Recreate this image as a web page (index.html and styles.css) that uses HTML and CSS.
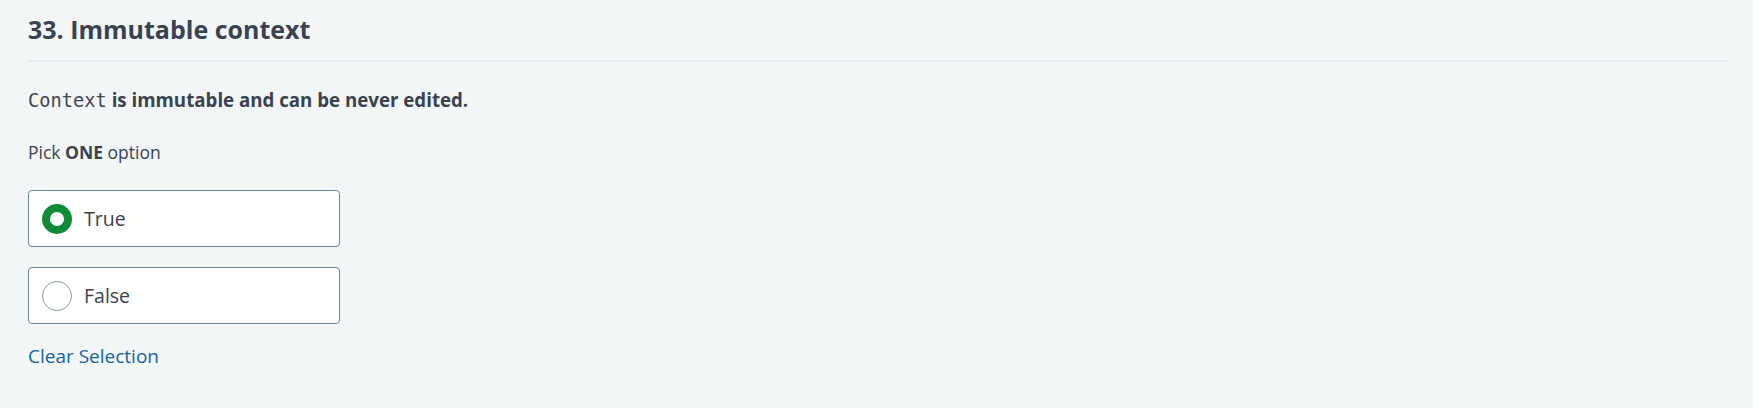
FILE: index.html
```html
<!DOCTYPE html>
<html lang="en">
<head>
<meta charset="utf-8">
<title>33. Immutable context</title>
<link rel="stylesheet" href="styles.css">
</head>
<body>
<main class="question">
  <h2 class="question-title">33. Immutable context</h2>
  <p class="statement"><code class="mono">Context</code> <strong>is immutable and can be never edited.</strong></p>
  <p class="instruction">Pick <strong>ONE</strong> option</p>
  <div class="options">
    <label class="option">
      <span class="radio radio-checked"></span>
      <span class="option-text">True</span>
    </label>
    <label class="option">
      <span class="radio"></span>
      <span class="option-text">False</span>
    </label>
  </div>
  <a class="clear" href="#">Clear Selection</a>
</main>
</body>
</html>
```
FILE: styles.css
```css
html, body {
  margin: 0;
  padding: 0;
  background: #f3f6f7;
}
body {
  font-family: "Open Sans", "Noto Sans", sans-serif;
  color: #39424e;
}
.question {
  padding: 0 26px 0 28px;
  display: flex;
  flex-direction: column;
  align-items: flex-start;
}
.question-title {
  align-self: stretch;
  margin: 0;
  padding: 12px 0 14px;
  font-size: 25px;
  font-weight: 700;
  line-height: 34px;
  border-bottom: 2px solid #e5ebec;
}
.statement {
  margin: 25px 0 0;
  font-size: 18.7px;
  line-height: 26px;
}
.mono {
  font-family: "DejaVu Sans Mono", "Liberation Mono", monospace;
  font-size: 18.7px;
  line-height: 1;
  color: #3d4652;
}
.statement strong { font-weight: 700; }
.instruction {
  margin: 27px 0 0;
  font-size: 17.5px;
  line-height: 24px;
}
.instruction strong { font-weight: 700; }
.options {
  margin-top: 26px;
  display: flex;
  flex-direction: column;
  gap: 20px;
}
.option {
  box-sizing: border-box;
  width: 312px;
  height: 57px;
  display: flex;
  align-items: center;
  gap: 12px;
  padding: 0 13px;
  background: #fff;
  border: 1px solid #6b8794;
  border-radius: 4px;
}
.radio {
  box-sizing: border-box;
  width: 30px;
  height: 30px;
  border-radius: 50%;
  border: 1px solid #849a9f;
  background: #fff;
}
.radio-checked {
  border: 8px solid #0f8a36;
}
.option-text {
  font-size: 19.5px;
  line-height: 26px;
  color: #39424e;
}
.clear {
  margin-top: 18.5px;
  font-size: 19px;
  line-height: 26px;
  color: #15629e;
  text-decoration: none;
}
```
